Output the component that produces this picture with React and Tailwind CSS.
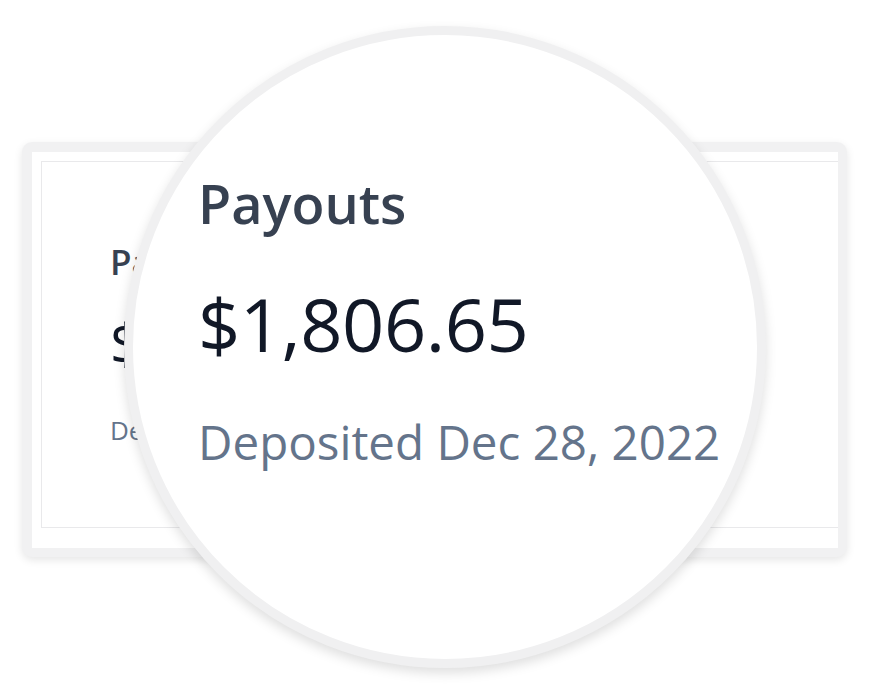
import React from "react";

const PayoutText = ({ title, amount, note, sizes }) => (
	<div className="flex flex-col">
		<div className={`font-semibold leading-none text-[#374151] ${sizes.title}`}>{title}</div>
		<div className={`font-normal leading-none text-[#111827] ${sizes.amount}`}>{amount}</div>
		<div className={`font-normal leading-none text-[#64748b] ${sizes.note}`}>{note}</div>
	</div>
);

const cardSizes = {
	title: "text-[35px]",
	amount: "text-[56px] mt-[36px]",
	note: "text-[26px] mt-[46px]",
};

const lensSizes = {
	title: "text-[54px]",
	amount: "text-[74px] mt-[57px] tracking-[-0.5px]",
	note: "text-[47.5px] mt-[57px]",
};

export default function App() {
	return (
		<div className="relative w-[870px] h-[699px] overflow-hidden bg-white pl-[22px] pt-[142px] font-['Open_Sans',sans-serif]">
			<div className="w-[825px] h-[415px] rounded-[10px] bg-[#f1f1f2] pl-[10px] pt-[10px] pr-[9px] pb-[9px] shadow-[0_3px_8px_rgba(0,0,0,0.10)]">
				<div className="flex flex-col h-full bg-white pl-[9px] pt-[9px] pb-[20px]">
					<div className="flex-1 border-l border-t border-b border-[#e9e9eb] pl-[68px] pt-[82px]">
						<PayoutText
							title="Payouts"
							amount="$1,806.65"
							note="Deposited Dec 28, 2022"
							sizes={cardSizes}
						/>
					</div>
				</div>
			</div>

			<div className="absolute left-[124px] top-[26px] w-[642px] h-[642px] rounded-full border-[9px] border-[#f0f0f1] bg-white pl-[65px] pt-[141px] shadow-[0_5px_12px_rgba(0,0,0,0.13)]">
				<PayoutText
					title="Payouts"
					amount="$1,806.65"
					note="Deposited Dec 28, 2022"
					sizes={lensSizes}
				/>
			</div>
		</div>
	);
}
